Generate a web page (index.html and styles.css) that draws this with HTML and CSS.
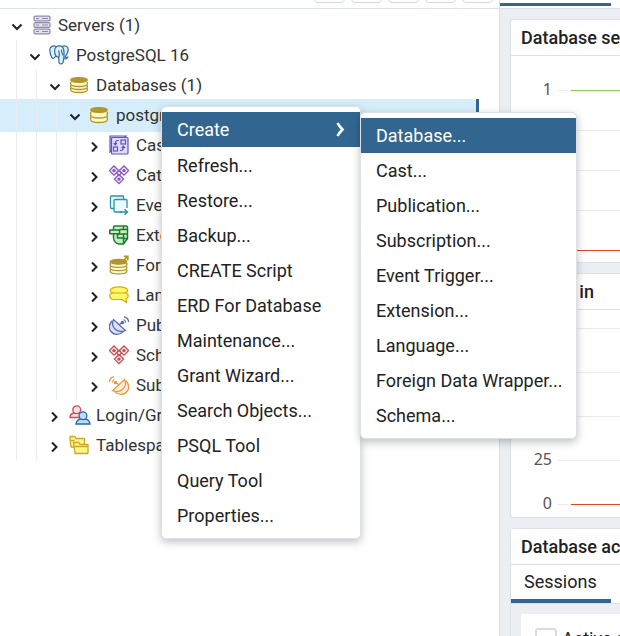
FILE: index.html
```html
<!DOCTYPE html>
<html lang="en">
<head>
<meta charset="utf-8">
<title>pgAdmin 4</title>
<link rel="stylesheet" href="styles.css">
</head>
<body>
<svg class="defs" aria-hidden="true">
  <symbol id="down" viewBox="0 0 12 12"><path d="M1.500 3.500l4.500 4.500 4.500-4.500" fill="none" stroke="#222" stroke-width="2"/></symbol>
  <symbol id="right" viewBox="0 0 12 12"><path d="M3 1.500l4.500 4.500L3 10.500" fill="none" stroke="#222" stroke-width="2"/></symbol>
  <symbol id="servers" viewBox="0 0 20 20"><g fill="#e4e2ee" stroke="#8d89a5" stroke-width="1.2"><rect x="2" y="1.2" width="16" height="4.6" rx="1.4"/><rect x="2" y="7.7" width="16" height="4.6" rx="1.4"/><rect x="2" y="14.2" width="16" height="4.6" rx="1.4"/></g><path d="M4 3.5h3M4 10h3M4 16.500h3M10 3.500h6M10 10h6M10 16.500h6" stroke="#8d89a5"/></symbol>
  <symbol id="elephant" viewBox="0 0 20 20"><g fill="#dceefa" stroke="#2f6f9f" stroke-width="1.2" stroke-linejoin="round"><path d="M7 1.500C4 0 .8 1.500.8 5c0 3 1.600 8 3.200 8.500 1 .3 2-1.500 3-2.500"/><path d="M13 1.500c3-1.500 6.200 0 6.200 3 0 2.500-1.700 5.500-3.200 7.500 1 .7 2 .3 3 0-.7 1.500-2.500 2-4 1.500"/><path d="M7 11C5 8 5 3 7.500 1.700 9 .6 12 .6 13.500 2c2 2 1.500 6 1.500 9-.2 3-.5 5-1 6.500-.8 2-3.800 2-4 0L9.700 12C9 12.500 8 12 7 11z"/><path d="M9.700 12c1.300-2 .8-4-.2-6.500M12.500 4.500c-.5 2 1 4 1.500 6" fill="none"/></g></symbol>
  <symbol id="databases" viewBox="0 0 20 20"><g fill="#fff7cf" stroke="#b1962c" stroke-width="1.300"><path d="M1.700 13v2c0 3.300 16.600 3.300 16.600 0v-2"/><path d="M1.700 10v2c0 3.300 16.600 3.300 16.600 0v-2"/><path d="M1.700 7v2c0 3.300 16.600 3.300 16.600 0V7"/><ellipse cx="10" cy="5" rx="8.300" ry="2.400" fill="#b1962c"/></g></symbol>
  <symbol id="database" viewBox="0 0 20 20"><g fill="#fffac2" stroke="#b1962c" stroke-width="1.300"><path d="M1.700 11.500v3.500c0 3.300 16.600 3.300 16.600 0v-3.500"/><path d="M1.700 7v3.500c0 3.300 16.600 3.300 16.600 0V7"/><ellipse cx="10" cy="5" rx="8.300" ry="2.400" fill="#b1962c"/></g></symbol>
  <symbol id="casts" viewBox="0 0 20 20"><g fill="#dfdbfb" stroke="#6352bd" stroke-width="1.200"><path d="M1 17V1h16z" /><rect x="2.500" y="2.500" width="16.500" height="16.500" rx="1"/><g fill="none"><rect x="4.500" y="12" width="4" height="4"/><rect x="12" y="5" width="4.500" height="4"/><path d="M9.800 5.500H8.500Q6.300 5.500 6.300 9.500M4.800 8l1.500 1.800L8 8M11 15.500h1Q14.300 15.500 14.300 11.500M12.700 13l1.600-1.800 1.600 1.800"/></g></g></symbol>
  <symbol id="diamonds" viewBox="0 0 20 20"><g fill="var(--diamond-fill)" stroke="currentColor" stroke-width="1.300"><path d="M5 1l4.600 4.600L5 10.200.4 5.600z"/><path d="M15 1l4.600 4.600-4.600 4.600-4.600-4.600z"/><path d="M10 9.500l4.600 4.600L10 18.700l-4.600-4.600z"/><path d="M10 5.500l2.500 2.500L10 10.500 7.500 8z"/></g><g fill="currentColor"><circle cx="5" cy="5.600" r="1.700"/><circle cx="15" cy="5.600" r="1.700"/><circle cx="10" cy="14.100" r="1.700"/></g></symbol>
  <symbol id="events" viewBox="0 0 20 20"><g fill="#eafcff" stroke="#2b94a6" stroke-width="1.300"><path d="M14.500 4V1.500Q14.500 1 14 1H2.500Q1.500 1 1.500 2v10.500q0 1 1 1H5"/><path d="M18 13V5.500q0-1-1-1H6q-1 0-1 1v10.500q0 1 1 1h7" /><path d="M11 17h7M15.500 14.300l3 2.700-3 2.700" fill="none" stroke-width="1.500"/></g></symbol>
  <symbol id="extensions" viewBox="0 0 20 20"><g fill="#c3efc0" stroke="#1e7a2c" stroke-width="1.500" stroke-linejoin="round"><path d="M4.500 5V2.300Q4.500 1 5.800 1h11.400q1.300 0 1.300 1.300V13.500l-4 5.500H10C6.500 18.500 5 16 4.500 13V9"/><path d="M.8 5h9.700v3.800H.8z"/><path d="M10.500 4.500h8M8.500 9v4h6M14.500 1.500v3M14.500 8.500V19M18.500 13.500h-4" fill="none"/><path d="M8.500 9h10"/></g></symbol>
  <symbol id="foreign" viewBox="0 0 20 20"><g fill="#fff7cf" stroke="#b1962c" stroke-width="1.300"><path d="M1.200 14.500v2c0 3.200 16.600 3.200 16.600 0v-2"/><path d="M1.200 11.300v2c0 3.200 16.600 3.200 16.600 0v-2"/><path d="M1.200 8v2c0 3.200 16.600 3.200 16.600 0V8"/><ellipse cx="9.500" cy="6.800" rx="8.300" ry="2.400" fill="#b1962c"/></g><path d="M14 6l4-4M14.800 1.300h4v4" fill="none" stroke="#b1962c" stroke-width="1.700"/></symbol>
  <symbol id="languages" viewBox="0 0 20 20"><g fill="#fff968" stroke="#d4ab14" stroke-width="1.200"><ellipse cx="10" cy="5.500" rx="8.800" ry="3.700"/><path d="M3.500 8h13Q19.200 8.500 19.200 11q0 2-2.200 2.800l.5 3.700-4.500-3H4Q.8 14 .8 11 .8 8.500 3.500 8z"/></g></symbol>
  <symbol id="dish" viewBox="0 0 20 20"><g fill="var(--dish-fill)" stroke="currentColor" stroke-width="1.200"><path d="M3 6Q-1.500 11 1.500 16q4.500 5.500 11 2l2.500-2z"/><path d="M4.500 4.500Q2 10 6 14t10.500 1.500z"/><path d="M10 10l3.500-3M14.500 4.500Q16.500 5 16.500 7.500M15 1.800Q19.500 2.500 19.500 7" fill="none"/></g><circle cx="13.500" cy="7.500" r="1.700" fill="currentColor"/></symbol>
  <symbol id="roles" viewBox="0 0 22 20"><g stroke-width="1.300"><g fill="#fbe0e0" stroke="#cb4c50"><path d="M1 12.500Q1 8.500 5.500 8h4q3 .5 4 4.500z"/><circle cx="7.700" cy="4.700" r="3.900"/></g><g fill="#b9dcf8" stroke="#2867b5"><path d="M7 19Q7.500 15 11.500 14h5q4 1 4.500 5z"/><circle cx="14" cy="10.700" r="3.900"/></g></g></symbol>
  <symbol id="folders" viewBox="0 0 20 20"><g fill="#fff686" stroke="#c8a92c" stroke-width="1.300" stroke-linejoin="round"><path d="M1 1.500h5l1 2h8.500V12H2L1 4z"/><path d="M4.500 7.500h5.500l1 2h8V18.500h-13z"/><path d="M5 11.500h14M1 5.500h4.500" fill="none"/></g></symbol>
</svg>
<header class="topbar">
  <div class="tools">
    <button aria-label="Object properties"></button><button aria-label="Query tool"></button><button aria-label="View data"></button><button aria-label="Filter"></button><button aria-label="Search"></button>
  </div>
  <div class="toptab"></div>
</header>
<main class="work">
  <nav class="explorer" aria-label="Object explorer">
    <ul class="tree">
      <li><div class="row root"><svg class="chev"><use href="#down"/></svg><svg class="ico"><use href="#servers"/></svg><span>Servers (1)</span></div>
      <ul>
        <li><div class="row"><svg class="chev"><use href="#down"/></svg><svg class="ico"><use href="#elephant"/></svg><span>PostgreSQL 16</span></div>
        <ul>
          <li><div class="row"><svg class="chev"><use href="#down"/></svg><svg class="ico"><use href="#databases"/></svg><span>Databases (1)</span></div>
          <ul>
            <li><div class="row selected"><svg class="chev"><use href="#down"/></svg><svg class="ico"><use href="#database"/></svg><span>postgres</span></div>
            <ul>
              <li><div class="row"><svg class="chev"><use href="#right"/></svg><svg class="ico"><use href="#casts"/></svg><span>Casts</span></div></li>
              <li><div class="row"><svg class="chev"><use href="#right"/></svg><svg class="ico purple"><use href="#diamonds"/></svg><span>Catalogs</span></div></li>
              <li><div class="row"><svg class="chev"><use href="#right"/></svg><svg class="ico"><use href="#events"/></svg><span>Event Triggers</span></div></li>
              <li><div class="row"><svg class="chev"><use href="#right"/></svg><svg class="ico"><use href="#extensions"/></svg><span>Extensions</span></div></li>
              <li><div class="row"><svg class="chev"><use href="#right"/></svg><svg class="ico"><use href="#foreign"/></svg><span>Foreign Data Wrappers</span></div></li>
              <li><div class="row"><svg class="chev"><use href="#right"/></svg><svg class="ico"><use href="#languages"/></svg><span>Languages</span></div></li>
              <li><div class="row"><svg class="chev"><use href="#right"/></svg><svg class="ico blue"><use href="#dish"/></svg><span>Publications</span></div></li>
              <li><div class="row"><svg class="chev"><use href="#right"/></svg><svg class="ico red"><use href="#diamonds"/></svg><span>Schemas</span></div></li>
              <li><div class="row"><svg class="chev"><use href="#right"/></svg><svg class="ico amber"><use href="#dish"/></svg><span>Subscriptions</span></div></li>
            </ul></li>
          </ul></li>
          <li><div class="row"><svg class="chev"><use href="#right"/></svg><svg class="ico wide"><use href="#roles"/></svg><span>Login/Group Roles</span></div></li>
          <li><div class="row"><svg class="chev"><use href="#right"/></svg><svg class="ico"><use href="#folders"/></svg><span>Tablespaces</span></div></li>
        </ul></li>
      </ul></li>
    </ul>
  </nav>
  <section class="dashboard">
    <article class="panel">
      <h2>Database sessions</h2>
      <div class="chart sessions">
        <div class="line high"><span>1</span></div><div class="line"></div><div class="line"></div><div class="line"></div><div class="line low"></div>
      </div>
    </article>
    <article class="panel">
      <h2>Tuples in</h2>
      <div class="chart tuples">
        <div class="line"></div><div class="line"></div><div class="line"></div><div class="line"><span>25</span></div><div class="line low"><span>0</span></div>
      </div>
    </article>
    <article class="panel activity">
      <h2>Database activity</h2>
      <div class="tabs"><button class="tab">Sessions</button></div>
      <div class="filter"><input type="checkbox" id="active"><label for="active">Active sessions only</label></div>
    </article>
  </section>
</main>
<div class="menu context" role="menu">
  <button class="current" role="menuitem">Create<svg class="more" viewBox="0 0 9 15"><path d="M1.500 1Q3 4 6.500 7.500 3 11 1.500 14" fill="none" stroke="#fff" stroke-width="2.600"/></svg></button>
  <button role="menuitem">Refresh...</button>
  <button role="menuitem">Restore...</button>
  <button role="menuitem">Backup...</button>
  <button role="menuitem">CREATE Script</button>
  <button role="menuitem">ERD For Database</button>
  <button role="menuitem">Maintenance...</button>
  <button role="menuitem">Grant Wizard...</button>
  <button role="menuitem">Search Objects...</button>
  <button role="menuitem">PSQL Tool</button>
  <button role="menuitem">Query Tool</button>
  <button role="menuitem">Properties...</button>
</div>
<div class="menu submenu" role="menu">
  <button class="current" role="menuitem">Database...</button>
  <button role="menuitem">Cast...</button>
  <button role="menuitem">Publication...</button>
  <button role="menuitem">Subscription...</button>
  <button role="menuitem">Event Trigger...</button>
  <button role="menuitem">Extension...</button>
  <button role="menuitem">Language...</button>
  <button role="menuitem">Foreign Data Wrapper...</button>
  <button role="menuitem">Schema...</button>
</div>
</body>
</html>
```
FILE: styles.css
```css
* { box-sizing: border-box; }
body {
  margin: 0;
  height: 100vh;
  overflow: hidden;
  display: flex;
  flex-direction: column;
  background: #fff;
  color: #222;
  font: 17px/30px Roboto, "Liberation Sans", sans-serif;
}
button { font: inherit; color: inherit; background: none; border: 0; padding: 0; }
.defs { display: none; }

.topbar { display: flex; height: 9px; border-bottom: 1px solid #dde0e6; }
.tools {
  width: 500px;
  display: flex;
  justify-content: flex-end;
  align-items: flex-end;
  gap: 6px;
  padding: 0 6px 5px 0;
  border-right: 1px solid #dde0e6;
}
.tools button { width: 31px; height: 30px; border: 1px solid #d5d8e2; border-radius: 4px; }
.toptab { width: 111px; height: 6px; border-bottom: 3px solid #326690; }

.work { flex: 1; display: flex; min-height: 0; }
.explorer { width: 500px; border-right: 1px solid #dde0e6; color: #333; }
.tree { position: relative; z-index: 0; padding-top: 1px; }
ul { list-style: none; margin: 0; padding: 0; }
.tree ul { margin-left: 19px; border-left: 1px solid #e8ebf2; }
.tree > li > ul { margin-left: 16px; }
.row { display: flex; align-items: center; height: 30px; padding-left: 12px; white-space: nowrap; }
.root .chev { margin-right: 9px; }
.root .ico { margin-right: 6px; }
.row.root { padding-left: 11px; }
.chev { width: 12px; height: 12px; margin: 3px 8px 0 0; }
.ico { width: 20px; height: 20px; margin-right: 7px; }
.ico.wide { width: 22px; margin-right: 5px; }
.selected::before {
  content: "";
  position: absolute;
  z-index: -1;
  left: 0;
  right: 20px;
  height: 33px;
  align-self: flex-start;
  margin-top: -1px;
  background: #d6eefc;
  border-right: 3px solid #326690;
}
.purple { color: #8456c4; --diamond-fill: #efe6fb; }
.red { color: #c94b50; --diamond-fill: #fdeaea; }
.blue { color: #5568b5; --dish-fill: #dbe1f4; }
.amber { color: #ec9535; --dish-fill: #ffeeda; transform: scaleX(-1); }

.dashboard {
  flex: 1;
  min-width: 0;
  display: flex;
  flex-direction: column;
  gap: 10px;
  padding: 10px 0 0 10px;
  background: #ebeef3;
  overflow: hidden;
}
.panel { flex: none; border: 1px solid #dde0e6; border-right: 0; border-radius: 4px 0 0 4px; background: #fff; }
h2 { margin: 0; padding-left: 10px; height: 36px; border-bottom: 1px solid #dde0e6; font-size: 18px; line-height: 36px; font-weight: 500; white-space: nowrap; overflow: hidden; }
.chart { display: flex; flex-direction: column; justify-content: space-between; padding: 34px 0 11px 47px; font: 16px/20px "Noto Sans", sans-serif; color: #555; }
.sessions { height: 206px; }
.tuples { height: 207px; padding-top: 18px; padding-bottom: 12px; }
.line { position: relative; flex: none; height: 1px; background: #ebebeb; }
.line span { position: absolute; right: 100%; top: -11px; margin-right: 6px; }
.high, .low { padding-left: 13px; }
.high::after, .low::after { content: ""; display: block; height: 1px; background: #86d256; }
.low::after { background: #e2481e; }

.activity { background: #ebeef3; }
.activity h2 { background: #fff; }
.tabs { height: 39px; background: #fff; border-bottom: 1px solid #dde0e6; }
.tab { width: 100px; height: 38px; padding-left: 13px; text-align: left; border-bottom: 4px solid #326690; font-size: 18px; line-height: 34px; }
.filter { display: flex; align-items: flex-start; gap: 5px; margin: 10px 0 0 10px; padding: 14px; height: 60px; background: #fff; white-space: nowrap; font-size: 18px; line-height: 22px; overflow: hidden; }
.filter input { appearance: none; flex: none; width: 22px; height: 22px; margin: 0; border: 2px solid #d9dce7; border-radius: 3px; }

.menu {
  position: absolute;
  display: flex;
  flex-direction: column;
  padding: 5px 0;
  border: 1px solid #dde0e6;
  border-radius: 5px;
  background: #fff;
  box-shadow: 0 3px 8px rgba(0, 0, 0, .25);
  font-size: 18px;
}
.menu button { display: flex; justify-content: space-between; align-items: center; height: 35px; padding: 0 15px; text-align: left; white-space: nowrap; }
.menu .current { background: #326690; color: #fff; }
.context { left: 161px; top: 106px; width: 200px; }
.context .current { margin-bottom: 1px; }
.submenu { left: 360px; top: 112px; width: 217px; }
.more { width: 9px; height: 15px; }
```
